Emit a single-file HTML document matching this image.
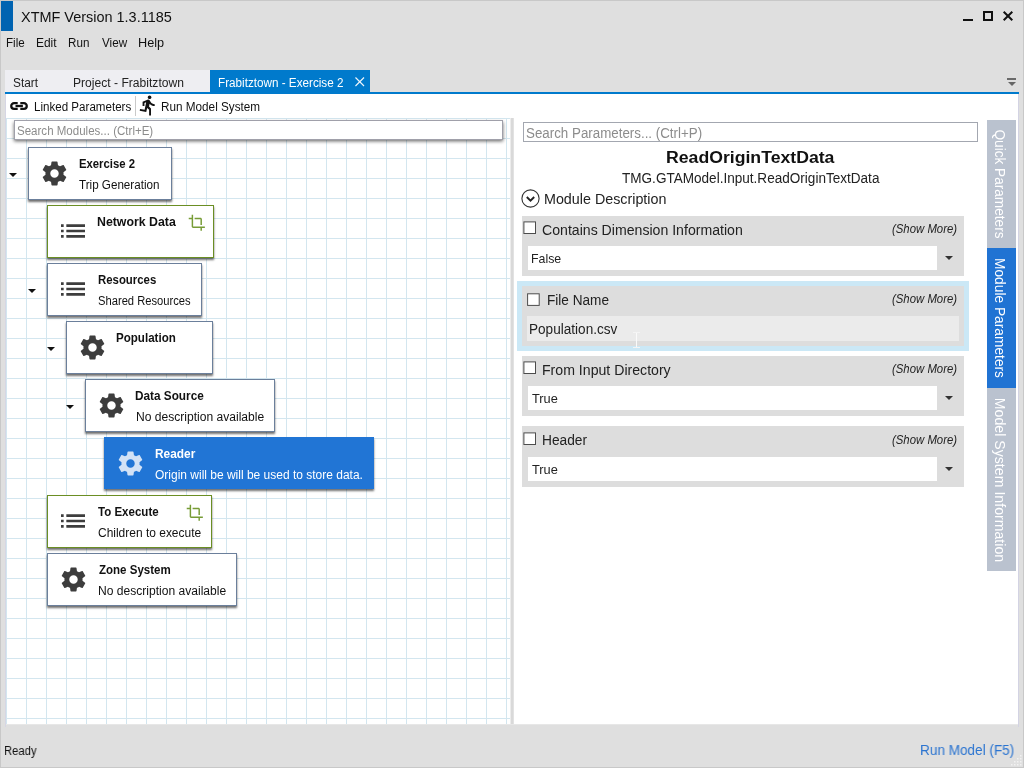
<!DOCTYPE html>
<html lang="en"><head><meta charset="utf-8"><title>XTMF Version 1.3.1185</title>
<style>
html,body{margin:0;padding:0}
body{width:1024px;height:768px;overflow:hidden;position:relative;background:#dfdfdf;font-family:"Liberation Sans",sans-serif}
div,span,svg{position:absolute;box-sizing:border-box}
.t{white-space:nowrap;line-height:1;transform-origin:0 0}
.i{overflow:visible}
.node{background:#fff;border:1px solid #6b7f9b;height:53px;box-shadow:.4px 1.5px 2px rgba(0,0,0,.56)}
.node.g{border-color:#6b8e23}
.node.s{background:#2175d5;border-color:#2175d5;height:52px}
.arrow{width:0;height:0;border-left:4px solid transparent;border-right:4px solid transparent;border-top:4.3px solid #111}
.blk{background:#dddddd;left:522px;width:442px;height:60px}
.cb{width:13px;height:13px;background:#fff;border:1px solid #4a4a4a}
.combo{left:528px;width:409px;height:24px;background:#fff}
.dd{left:945px;width:0;height:0;border-left:4px solid transparent;border-right:4px solid transparent;border-top:4.5px solid #333}
.vt{left:987px;width:29px;color:#fff;font-size:14.5px}
.vt span{white-space:nowrap;line-height:1;left:13px;top:50%}
#w{left:0;top:0;width:1024px;height:768px;will-change:transform}
</style></head><body><div id="w">

<div style="left:0;top:0;width:1024px;height:768px;border:1px solid #c8c8c8"></div>
<div style="left:1px;top:1px;width:12px;height:30px;background:#0063b1"></div>
<div style="left:963px;top:18.5px;width:10px;height:2px;background:#111"></div>
<div style="left:983px;top:11px;width:10px;height:10px;border:2px solid #111"></div>
<svg class="i" style="left:1003px;top:11px" width="10" height="10" viewBox="0 0 10 10"><path d="M0.7 0.7L9.3 9.3M9.3 0.7L0.7 9.3" stroke="#111" stroke-width="2" fill="none"/></svg>
<div style="left:5px;top:70px;width:205px;height:22px;background:#eeeef2"></div>
<div style="left:210px;top:70px;width:160px;height:23px;background:#007acc"></div>
<svg class="i" style="left:354.5px;top:77px" width="9.5" height="9.5" viewBox="0 0 10 10"><path d="M0.5 0.5L9.5 9.5M9.5 0.5L0.5 9.5" stroke="#eef5fb" stroke-width="1.2" fill="none"/></svg>
<div style="left:1007px;top:78px;width:9px;height:2px;background:#6a6a6a"></div>
<div style="left:1007.8px;top:82px;width:0;height:0;border-left:4.2px solid transparent;border-right:4.2px solid transparent;border-top:4.3px solid #666"></div>
<div style="left:5px;top:94px;width:1px;height:633px;background:#d6d6e4"></div>
<div style="left:6px;top:94px;width:1012px;height:630px;background:#fff"></div>
<div style="left:5px;top:92px;width:1014px;height:2px;background:#007acc"></div>
<div style="left:1018px;top:94px;width:1px;height:633px;background:#d3d3e3"></div>
<div style="left:6px;top:724px;width:1012px;height:1px;background:#e7e7e7"></div>
<div style="left:6px;top:118px;width:504px;height:606px;background-color:#fff;background-image:linear-gradient(to right,#d3e6ef 1px,transparent 1px),linear-gradient(to bottom,#d3e6ef 1px,transparent 1px);background-size:20px 20px"></div>
<div style="left:510px;top:118px;width:4px;height:606px;background:linear-gradient(to right,#ececec 0,#ececec 25%,#d9d9d9 25%,#d9d9d9 75%,#e2e2e2 75%)"></div>
<svg class="i" style="left:0;top:94px" width="40" height="24" viewBox="0 94 40 24"><g fill="none" stroke="#111" stroke-width="2.3"><path d="M17.7 103.15H14.1a2.85 2.85 0 0 0 0 5.7H17.7"/><path d="M20.3 103.15H23.9a2.85 2.85 0 0 1 0 5.7H20.3"/><path d="M15.5 106H22.9"/></g></svg>
<div style="left:135px;top:96px;width:1px;height:20px;background:#c9c9c9"></div>
<svg class="i" style="left:137.3px;top:93.8px" width="22.4" height="22.4" viewBox="0 0 24 24"><path fill="#111" d="M13.49 5.48c1.1 0 2-.9 2-2s-.9-2-2-2-2 .9-2 2 .9 2 2 2zm-3.6 13.9l1-4.4 2.1 2v6h2v-7.500l-2.100-2 .6-3c1.3 1.5 3.3 2.5 5.500 2.500v-2c-1.900 0-3.500-1-4.300-2.400l-1-1.600c-.4-.6-1-1-1.700-1-.3 0-.5.100-.8.100l-5.200 2.200v4.700h2v-3.400l1.800-.7-1.600 8.100-4.900-1-.4 2 7 1.400z"/></svg>
<div style="left:14px;top:120px;width:489px;height:20px;background:#fff;border:1px solid #a0a0aa;box-shadow:0 2.2px 3.5px rgba(0,0,0,.6)"></div>
<div class="node" style="left:28px;top:147px;width:144px"></div>
<svg class="i" style="left:40.3px;top:159.0px" width="29" height="29" viewBox="0 0 24 24"><path fill="#3d3d3d" d="M19.43 12.98c.04-.32.07-.64.07-.98s-.03-.66-.07-.98l2.11-1.65c.19-.15.24-.42.12-.64l-2-3.46c-.12-.22-.39-.3-.61-.22l-2.49 1c-.52-.4-1.08-.73-1.69-.98l-.38-2.65C14.46 2.18 14.25 2 14 2h-4c-.25 0-.46.18-.49.42l-.38 2.65c-.61.25-1.17.59-1.69.98l-2.49-1c-.23-.09-.49 0-.61.22l-2 3.46c-.13.22-.07.49.12.64l2.11 1.65c-.04.32-.07.65-.07.98s.03.66.07.98l-2.11 1.65c-.19.15-.24.42-.12.64l2 3.46c.12.22.39.3.61.22l2.49-1c.52.4 1.08.73 1.69.98l.38 2.65c.03.24.24.42.49.42h4c.25 0 .46-.18.49-.42l.38-2.65c.61-.25 1.17-.59 1.69-.98l2.49 1c.23.09.49 0 .61-.22l2-3.46c.12-.22.07-.49-.12-.64l-2.11-1.65zM12 15.5c-1.93 0-3.5-1.57-3.5-3.5s1.57-3.5 3.5-3.5 3.5 1.57 3.5 3.5-1.57 3.5-3.5 3.5z"/></svg>
<div class="node g" style="left:47px;top:205px;width:167px"></div>
<svg class="i" style="left:57px;top:214.8px" width="32" height="32" viewBox="0 0 24 24"><path fill="#3d3d3d" d="M3 13h2v-2H3v2zm0 4h2v-2H3v2zm0-8h2V7H3v2zm4 4h14v-2H7v2zm0 4h14v-2H7v2zM7 7v2h14V7H7z"/></svg>
<svg class="i" style="left:188.1px;top:214.2px" width="17.6" height="17.6" viewBox="0 0 24 24"><path fill="#779c36" d="M17 15h2V7c0-1.1-.9-2-2-2H9v2h8v8zM7 17V1H5v4H1v2h4v10c0 1.1.9 2 2 2h10v4h2v-4h4v-2H7z"/></svg>
<div class="node" style="left:47px;top:263px;width:155px"></div>
<svg class="i" style="left:57px;top:272.8px" width="32" height="32" viewBox="0 0 24 24"><path fill="#3d3d3d" d="M3 13h2v-2H3v2zm0 4h2v-2H3v2zm0-8h2V7H3v2zm4 4h14v-2H7v2zm0 4h14v-2H7v2zM7 7v2h14V7H7z"/></svg>
<div class="node" style="left:66px;top:321px;width:147px"></div>
<svg class="i" style="left:78.3px;top:333.0px" width="29" height="29" viewBox="0 0 24 24"><path fill="#3d3d3d" d="M19.43 12.98c.04-.32.07-.64.07-.98s-.03-.66-.07-.98l2.11-1.65c.19-.15.24-.42.12-.64l-2-3.46c-.12-.22-.39-.3-.61-.22l-2.49 1c-.52-.4-1.08-.73-1.69-.98l-.38-2.65C14.46 2.18 14.25 2 14 2h-4c-.25 0-.46.18-.49.42l-.38 2.65c-.61.25-1.17.59-1.69.98l-2.49-1c-.23-.09-.49 0-.61.22l-2 3.46c-.13.22-.07.49.12.64l2.11 1.65c-.04.32-.07.65-.07.98s.03.66.07.98l-2.11 1.65c-.19.15-.24.42-.12.64l2 3.46c.12.22.39.3.61.22l2.49-1c.52.4 1.08.73 1.69.98l.38 2.65c.03.24.24.42.49.42h4c.25 0 .46-.18.49-.42l.38-2.65c.61-.25 1.17-.59 1.69-.98l2.49 1c.23.09.49 0 .61-.22l2-3.46c.12-.22.07-.49-.12-.64l-2.11-1.65zM12 15.5c-1.93 0-3.5-1.57-3.5-3.5s1.57-3.5 3.5-3.5 3.5 1.57 3.5 3.5-1.57 3.5-3.5 3.5z"/></svg>
<div class="node" style="left:85px;top:379px;width:189.5px"></div>
<svg class="i" style="left:97.3px;top:391.0px" width="29" height="29" viewBox="0 0 24 24"><path fill="#3d3d3d" d="M19.43 12.98c.04-.32.07-.64.07-.98s-.03-.66-.07-.98l2.11-1.65c.19-.15.24-.42.12-.64l-2-3.46c-.12-.22-.39-.3-.61-.22l-2.49 1c-.52-.4-1.08-.73-1.69-.98l-.38-2.65C14.46 2.18 14.25 2 14 2h-4c-.25 0-.46.18-.49.42l-.38 2.65c-.61.25-1.17.59-1.69.98l-2.49-1c-.23-.09-.49 0-.61.22l-2 3.46c-.13.22-.07.49.12.64l2.11 1.65c-.04.32-.07.65-.07.98s.03.66.07.98l-2.11 1.65c-.19.15-.24.42-.12.64l2 3.46c.12.22.39.3.61.22l2.49-1c.52.4 1.08.73 1.69.98l.38 2.65c.03.24.24.42.49.42h4c.25 0 .46-.18.49-.42l.38-2.65c.61-.25 1.17-.59 1.69-.98l2.49 1c.23.09.49 0 .61-.22l2-3.46c.12-.22.07-.49-.12-.64l-2.11-1.65zM12 15.5c-1.93 0-3.5-1.57-3.5-3.5s1.57-3.5 3.5-3.5 3.5 1.57 3.5 3.5-1.57 3.5-3.5 3.5z"/></svg>
<div class="node s" style="left:104px;top:437px;width:270px"></div>
<svg class="i" style="left:116.3px;top:449.0px" width="29" height="29" viewBox="0 0 24 24"><path fill="#d2e2f6" d="M19.43 12.98c.04-.32.07-.64.07-.98s-.03-.66-.07-.98l2.11-1.65c.19-.15.24-.42.12-.64l-2-3.46c-.12-.22-.39-.3-.61-.22l-2.49 1c-.52-.4-1.08-.73-1.69-.98l-.38-2.65C14.46 2.18 14.25 2 14 2h-4c-.25 0-.46.18-.49.42l-.38 2.65c-.61.25-1.17.59-1.69.98l-2.49-1c-.23-.09-.49 0-.61.22l-2 3.46c-.13.22-.07.49.12.64l2.11 1.65c-.04.32-.07.65-.07.98s.03.66.07.98l-2.11 1.65c-.19.15-.24.42-.12.64l2 3.46c.12.22.39.3.61.22l2.49-1c.52.4 1.08.73 1.69.98l.38 2.65c.03.24.24.42.49.42h4c.25 0 .46-.18.49-.42l.38-2.65c.61-.25 1.17-.59 1.69-.98l2.49 1c.23.09.49 0 .61-.22l2-3.46c.12-.22.07-.49-.12-.64l-2.11-1.65zM12 15.5c-1.93 0-3.5-1.57-3.5-3.5s1.57-3.5 3.5-3.5 3.5 1.57 3.5 3.5-1.57 3.5-3.5 3.5z"/></svg>
<div class="node g" style="left:47px;top:495px;width:165px"></div>
<svg class="i" style="left:57px;top:504.8px" width="32" height="32" viewBox="0 0 24 24"><path fill="#3d3d3d" d="M3 13h2v-2H3v2zm0 4h2v-2H3v2zm0-8h2V7H3v2zm4 4h14v-2H7v2zm0 4h14v-2H7v2zM7 7v2h14V7H7z"/></svg>
<svg class="i" style="left:186.1px;top:504.2px" width="17.6" height="17.6" viewBox="0 0 24 24"><path fill="#779c36" d="M17 15h2V7c0-1.1-.9-2-2-2H9v2h8v8zM7 17V1H5v4H1v2h4v10c0 1.1.9 2 2 2h10v4h2v-4h4v-2H7z"/></svg>
<div class="node" style="left:47px;top:553px;width:190px"></div>
<svg class="i" style="left:59.3px;top:565.0px" width="29" height="29" viewBox="0 0 24 24"><path fill="#3d3d3d" d="M19.43 12.98c.04-.32.07-.64.07-.98s-.03-.66-.07-.98l2.11-1.65c.19-.15.24-.42.12-.64l-2-3.46c-.12-.22-.39-.3-.61-.22l-2.49 1c-.52-.4-1.08-.73-1.69-.98l-.38-2.65C14.46 2.18 14.25 2 14 2h-4c-.25 0-.46.18-.49.42l-.38 2.65c-.61.25-1.17.59-1.69.98l-2.49-1c-.23-.09-.49 0-.61.22l-2 3.46c-.13.22-.07.49.12.64l2.11 1.65c-.04.32-.07.65-.07.98s.03.66.07.98l-2.11 1.65c-.19.15-.24.42-.12.64l2 3.46c.12.22.39.3.61.22l2.49-1c.52.4 1.08.73 1.69.98l.38 2.65c.03.24.24.42.49.42h4c.25 0 .46-.18.49-.42l.38-2.65c.61-.25 1.17-.59 1.69-.98l2.49 1c.23.09.49 0 .61-.22l2-3.46c.12-.22.07-.49-.12-.64l-2.11-1.65zM12 15.5c-1.93 0-3.5-1.57-3.5-3.5s1.57-3.5 3.5-3.5 3.5 1.57 3.5 3.5-1.57 3.5-3.5 3.5z"/></svg>
<div class="arrow" style="left:9px;top:172.8px"></div>
<div class="arrow" style="left:28px;top:288.8px"></div>
<div class="arrow" style="left:47px;top:346.8px"></div>
<div class="arrow" style="left:66px;top:404.8px"></div>
<div style="left:523px;top:122px;width:455px;height:20px;background:#fff;border:1px solid #a3a7b0"></div>
<svg class="i" style="left:521.4px;top:188.5px" width="19" height="19" viewBox="0 0 19 19"><circle cx="9.5" cy="9.5" r="8.6" fill="#fff" stroke="#333" stroke-width="1.1"/><path d="M5.8 8L9.5 11.6L13.2 8" fill="none" stroke="#222" stroke-width="1.9"/></svg>
<div style="left:517px;top:281px;width:452px;height:70px;background:#cbe8f6"></div>
<div class="blk" style="top:216px;height:60px"></div>
<svg class="i" style="left:523px;top:221px" width="15" height="15" viewBox="0 0 15 15"><rect x="0.9" y="0.9" width="11.6" height="11.6" fill="#fff" stroke="#4d4d4d" stroke-width="1"/></svg>
<div class="blk" style="top:286px;height:60px"></div>
<svg class="i" style="left:526px;top:293px" width="15" height="15" viewBox="0 0 15 15"><rect x="1.6" y="0.8" width="11.6" height="11.6" fill="#fff" stroke="#4d4d4d" stroke-width="1"/></svg>
<div class="blk" style="top:356px;height:60px"></div>
<svg class="i" style="left:523px;top:361px" width="15" height="15" viewBox="0 0 15 15"><rect x="0.9" y="0.9" width="11.6" height="11.6" fill="#fff" stroke="#4d4d4d" stroke-width="1"/></svg>
<div class="blk" style="top:426px;height:61px"></div>
<svg class="i" style="left:523px;top:432px" width="15" height="15" viewBox="0 0 15 15"><rect x="0.9" y="0.9" width="11.6" height="11.6" fill="#fff" stroke="#4d4d4d" stroke-width="1"/></svg>
<div class="combo" style="top:246px"></div>
<div class="dd" style="top:256px"></div>
<div class="combo" style="top:386px"></div>
<div class="dd" style="top:396px"></div>
<div class="combo" style="top:457px"></div>
<div class="dd" style="top:467px"></div>
<div style="left:527px;top:316px;width:432px;height:25px;background:#ebebeb"></div>
<div style="left:636px;top:332px;width:1px;height:16px;background:#fafafa"></div><div style="left:633px;top:332px;width:7px;height:1px;background:#f4f4f4"></div><div style="left:633px;top:347px;width:7px;height:1px;background:#f4f4f4"></div>
<div class="vt" style="top:120px;height:128px;background:#bac2cf"><span style="top:63.5px;transform:translate(-50%,-50%) rotate(90deg) scaleX(0.939)">Quick Parameters</span></div>
<div class="vt" style="top:248px;height:140px;background:#2073d3"><span style="top:70.19999999999999px;transform:translate(-50%,-50%) rotate(90deg) scaleX(0.948)">Module Parameters</span></div>
<div class="vt" style="top:388px;height:183px;background:#bac2cf"><span style="top:92px;transform:translate(-50%,-50%) rotate(90deg) scaleX(0.976)">Model System Information</span></div>
<svg class="i" style="left:1008px;top:755px" width="14" height="11" viewBox="0 0 14 11"><g fill="#f2f2f2"><rect x="12" y="0" width="1.5" height="1.5"/><rect x="9" y="3" width="1.5" height="1.5"/><rect x="12" y="3" width="1.5" height="1.5"/><rect x="6" y="6" width="1.5" height="1.5"/><rect x="9" y="6" width="1.5" height="1.5"/><rect x="12" y="6" width="1.5" height="1.5"/><rect x="3" y="9" width="1.5" height="1.5"/><rect x="6" y="9" width="1.5" height="1.5"/><rect x="9" y="9" width="1.5" height="1.5"/><rect x="12" y="9" width="1.5" height="1.5"/></g></svg>
<span class="t" id="t0" style="left:21.27px;top:8.9px;font-size:15.5px;color:#111;transform:scaleX(0.9323);">XTMF Version 1.3.1185</span>
<span class="t" id="t1" style="left:6.0px;top:37.44px;font-size:12.5px;color:#111;transform:scaleX(0.9278);">File</span>
<span class="t" id="t2" style="left:36.0px;top:37.44px;font-size:12.5px;color:#111;transform:scaleX(0.9563);">Edit</span>
<span class="t" id="t3" style="left:68.0px;top:37.44px;font-size:12.5px;color:#111;transform:scaleX(0.9314);">Run</span>
<span class="t" id="t4" style="left:101.9px;top:37.44px;font-size:12.5px;color:#111;transform:scaleX(0.9341);">View</span>
<span class="t" id="t5" style="left:138.0px;top:37.44px;font-size:12.5px;color:#111;transform:scaleX(1.0159);">Help</span>
<span class="t" id="t6" style="left:13.4px;top:77.44px;font-size:12.5px;color:#222;transform:scaleX(0.9484);">Start</span>
<span class="t" id="t7" style="left:73px;top:77.44px;font-size:12.5px;color:#222;transform:scaleX(0.9680);">Project - Frabitztown</span>
<span class="t" id="t8" style="left:218px;top:77.44px;font-size:12.5px;color:#fff;transform:scaleX(0.9360);">Frabitztown - Exercise 2</span>
<span class="t" id="t9" style="left:33.8px;top:101.44px;font-size:12.5px;color:#111;transform:scaleX(0.9267);">Linked Parameters</span>
<span class="t" id="t10" style="left:160.6px;top:101.44px;font-size:12.5px;color:#111;transform:scaleX(0.9385);">Run Model System</span>
<span class="t" id="t11" style="left:17.2px;top:125.44px;font-size:12.5px;color:#8c8c8c;transform:scaleX(0.9227);">Search Modules... (Ctrl+E)</span>
<span class="t" id="t12" style="left:78.73px;top:158.44px;font-size:12.5px;color:#111;font-weight:bold;transform:scaleX(0.9048);">Exercise 2</span>
<span class="t" id="t13" style="left:79.42px;top:179.44px;font-size:12.5px;color:#111;transform:scaleX(0.9314);">Trip Generation</span>
<span class="t" id="t14" style="left:97.4px;top:216.44px;font-size:12.5px;color:#111;font-weight:bold;transform:scaleX(0.9863);">Network Data</span>
<span class="t" id="t15" style="left:97.74px;top:274.44px;font-size:12.5px;color:#111;font-weight:bold;transform:scaleX(0.9119);">Resources</span>
<span class="t" id="t16" style="left:97.6px;top:295.44px;font-size:12.5px;color:#111;transform:scaleX(0.8953);">Shared Resources</span>
<span class="t" id="t17" style="left:116.4px;top:332.44px;font-size:12.5px;color:#111;font-weight:bold;transform:scaleX(0.9260);">Population</span>
<span class="t" id="t18" style="left:135.4px;top:390.44px;font-size:12.5px;color:#111;font-weight:bold;transform:scaleX(0.9425);">Data Source</span>
<span class="t" id="t19" style="left:135.6px;top:411.44px;font-size:12.5px;color:#111;transform:scaleX(0.9655);">No description available</span>
<span class="t" id="t20" style="left:155.42px;top:448.44px;font-size:12.5px;color:#fff;font-weight:bold;transform:scaleX(0.9498);">Reader</span>
<span class="t" id="t21" style="left:155.41px;top:469.44px;font-size:12.5px;color:#fff;transform:scaleX(0.9591);">Origin will be will be used to store data.</span>
<span class="t" id="t22" style="left:98.4px;top:506.44px;font-size:12.5px;color:#111;font-weight:bold;transform:scaleX(0.9223);">To Execute</span>
<span class="t" id="t23" style="left:98.0px;top:527.44px;font-size:12.5px;color:#111;transform:scaleX(0.9577);">Children to execute</span>
<span class="t" id="t24" style="left:98.91px;top:564.44px;font-size:12.5px;color:#111;font-weight:bold;transform:scaleX(0.9214);">Zone System</span>
<span class="t" id="t25" style="left:97.6px;top:585.44px;font-size:12.5px;color:#111;transform:scaleX(0.9655);">No description available</span>
<span class="t" id="t26" style="left:526.4px;top:127.34px;font-size:13.8px;color:#8c8c8c;transform:scaleX(0.9670);">Search Parameters... (Ctrl+P)</span>
<span class="t" id="t27" style="left:665.6px;top:149.29px;font-size:17.4px;color:#111;font-weight:bold;transform:scaleX(1.0152);">ReadOriginTextData</span>
<span class="t" id="t28" style="left:621.94px;top:172.34px;font-size:13.8px;color:#222;transform:scaleX(0.9826);">TMG.GTAModel.Input.ReadOriginTextData</span>
<span class="t" id="t29" style="left:544.0px;top:193.34px;font-size:13.8px;color:#222;transform:scaleX(1.0367);">Module Description</span>
<span class="t" id="t30" style="left:542.33px;top:224.34px;font-size:13.8px;color:#222;transform:scaleX(1.0227);">Contains Dimension Information</span>
<span class="t" id="t31" style="left:546.8px;top:294.34px;font-size:13.8px;color:#222;transform:scaleX(0.9852);">File Name</span>
<span class="t" id="t32" style="left:542px;top:364.34px;font-size:13.8px;color:#222;transform:scaleX(1.0233);">From Input Directory</span>
<span class="t" id="t33" style="left:542px;top:434.34px;font-size:13.8px;color:#222;transform:scaleX(0.9956);">Header</span>
<span class="t" id="t34" style="left:891.52px;top:223.44px;font-size:12.5px;color:#222;font-style:italic;transform:scaleX(0.9095);">(Show More)</span>
<span class="t" id="t35" style="left:891.52px;top:293.44px;font-size:12.5px;color:#222;font-style:italic;transform:scaleX(0.9095);">(Show More)</span>
<span class="t" id="t36" style="left:891.52px;top:363.44px;font-size:12.5px;color:#222;font-style:italic;transform:scaleX(0.9095);">(Show More)</span>
<span class="t" id="t37" style="left:891.52px;top:434.44px;font-size:12.5px;color:#222;font-style:italic;transform:scaleX(0.9095);">(Show More)</span>
<span class="t" id="t38" style="left:531.4px;top:253.27px;font-size:12.7px;color:#222;transform:scaleX(0.9733);">False</span>
<span class="t" id="t39" style="left:528.8px;top:323.34px;font-size:13.8px;color:#222;transform:scaleX(0.9847);">Population.csv</span>
<span class="t" id="t40" style="left:532.44px;top:393.27px;font-size:12.7px;color:#222;transform:scaleX(1.0074);">True</span>
<span class="t" id="t41" style="left:532.44px;top:464.27px;font-size:12.7px;color:#222;transform:scaleX(1.0074);">True</span>
<span class="t" id="t42" style="left:3.8px;top:745.44px;font-size:12.5px;color:#111;transform:scaleX(0.8984);">Ready</span>
<span class="t" id="t43" style="left:920.4px;top:744.34px;font-size:13.8px;color:#2b74d0;transform:scaleX(0.9829);">Run Model (F5)</span>
</div></body></html>
